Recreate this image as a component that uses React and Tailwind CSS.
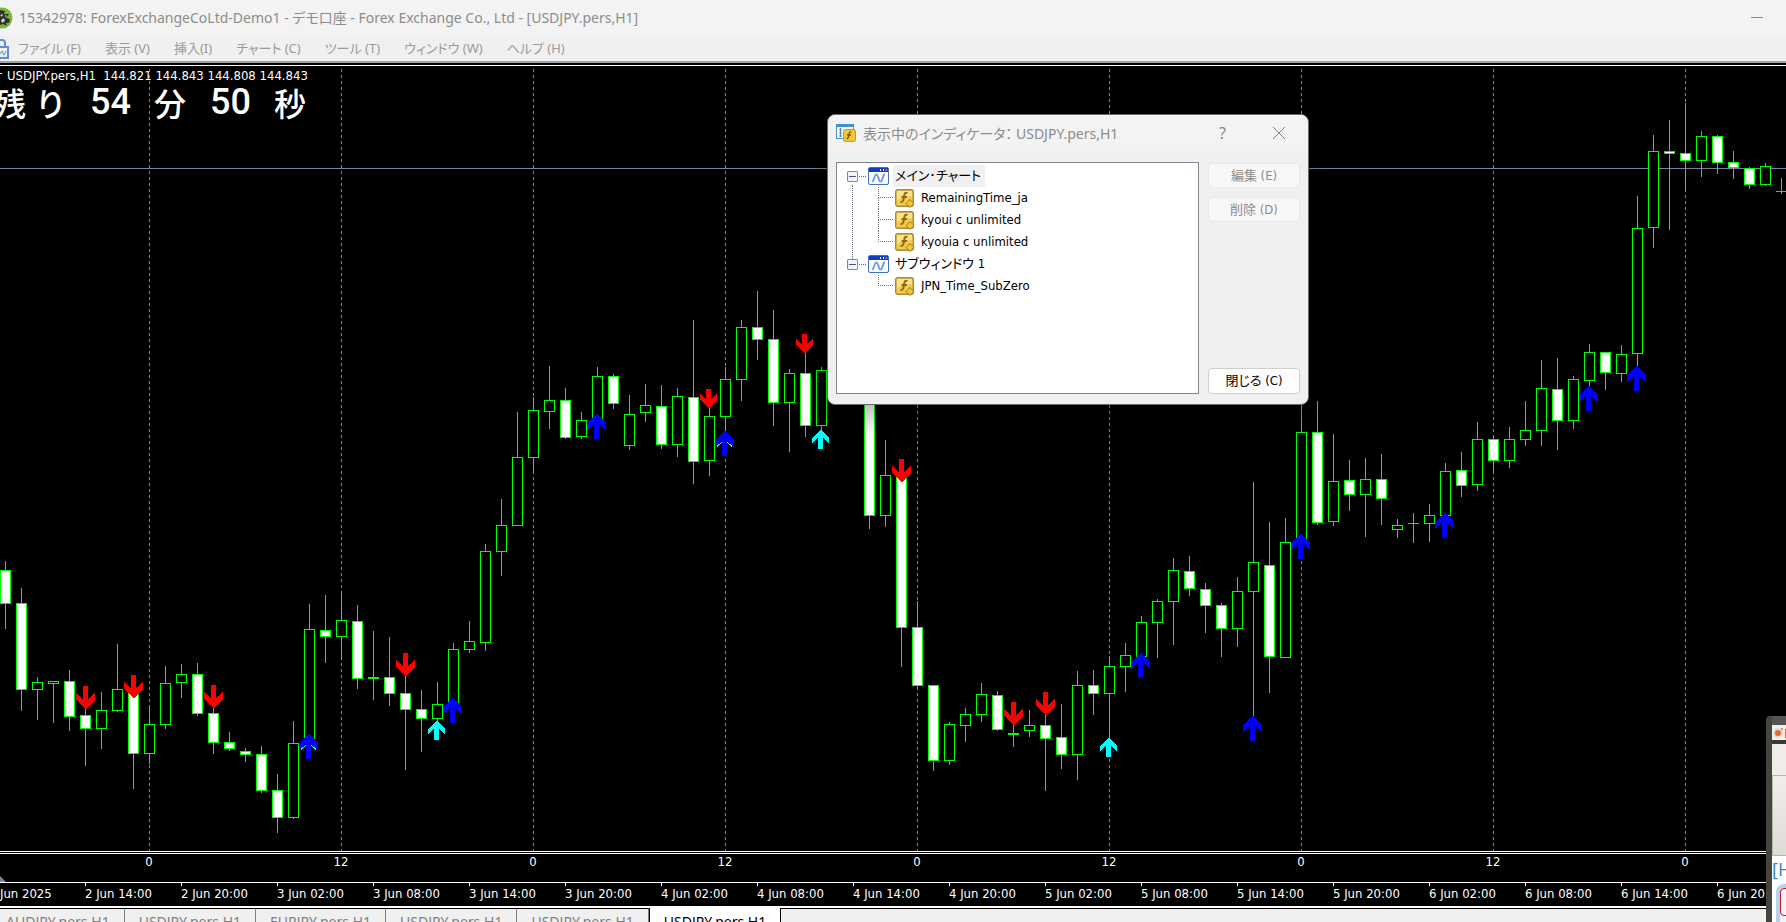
const CANDLES = [
  // high, open/close top, open/close bottom, low, bearish
  [561, 570, 604, 629, 1], [588, 603, 690, 711, 1], [677, 682, 690, 720, 0], [681, 681, 684, 723, 0],
  [670, 681, 717, 731, 1], [700, 715, 729, 766, 1], [692, 710, 729, 749, 0], [644, 689, 711, 712, 0],
  [689, 689, 754, 789, 1], [705, 724, 754, 764, 0], [666, 683, 725, 729, 0], [664, 674, 683, 698, 0],
  [663, 674, 714, 716, 1], [700, 713, 743, 754, 1], [732, 742, 749, 751, 1], [748, 751, 755, 762, 1],
  [746, 754, 791, 793, 1], [774, 790, 818, 833, 1], [721, 743, 818, 819, 0], [604, 629, 744, 744, 0],
  [595, 630, 637, 663, 1], [591, 620, 637, 660, 0], [605, 621, 679, 689, 1], [631, 677, 679, 700, 0],
  [637, 677, 694, 706, 1], [660, 693, 710, 770, 1], [690, 709, 719, 752, 1], [682, 704, 719, 724, 0],
  [643, 649, 703, 703, 0], [621, 641, 650, 653, 0], [544, 551, 643, 651, 0], [499, 525, 552, 576, 0],
  [412, 457, 526, 526, 0], [397, 410, 458, 472, 0], [366, 400, 412, 429, 0], [388, 400, 438, 439, 1],
  [412, 420, 437, 439, 0], [367, 376, 420, 420, 0], [374, 376, 404, 409, 1], [395, 414, 446, 450, 0],
  [384, 405, 413, 422, 0], [385, 406, 445, 449, 1], [388, 396, 445, 457, 0], [320, 397, 462, 484, 1],
  [400, 416, 461, 476, 0], [367, 379, 417, 432, 0], [320, 327, 380, 401, 0], [291, 327, 340, 360, 1],
  [310, 339, 403, 426, 1], [369, 373, 403, 452, 0], [345, 373, 426, 437, 1], [367, 370, 426, 431, 0],
  [300, 310, 370, 380, 1], [290, 300, 330, 350, 0], [300, 310, 516, 529, 1], [440, 475, 516, 527, 0],
  [470, 476, 628, 667, 1], [601, 627, 686, 688, 1], [685, 685, 761, 771, 1], [722, 724, 761, 765, 0],
  [708, 714, 726, 742, 0], [683, 694, 715, 722, 0], [691, 695, 730, 731, 1], [720, 733, 735, 747, 0],
  [710, 725, 731, 737, 0], [710, 725, 739, 791, 1], [704, 737, 755, 769, 1], [671, 685, 755, 780, 0],
  [670, 685, 694, 715, 1], [656, 666, 694, 740, 0], [643, 655, 667, 692, 0], [616, 622, 657, 657, 0],
  [599, 601, 623, 658, 0], [558, 570, 602, 645, 0], [556, 571, 589, 596, 1], [583, 589, 606, 633, 1],
  [603, 605, 629, 657, 1], [577, 591, 629, 647, 0], [482, 562, 592, 718, 0], [522, 565, 657, 693, 1],
  [518, 542, 658, 658, 0], [390, 432, 540, 540, 0], [401, 432, 523, 525, 1], [434, 481, 522, 526, 0],
  [460, 480, 495, 511, 1], [458, 479, 495, 537, 0], [454, 479, 499, 525, 1], [519, 525, 530, 538, 0],
  [513, 523, 524, 543, 0], [504, 515, 524, 542, 0], [463, 471, 516, 516, 0], [452, 470, 486, 497, 1],
  [422, 439, 485, 491, 0], [437, 439, 461, 473, 1], [427, 439, 461, 468, 0], [401, 430, 440, 446, 0],
  [360, 388, 431, 446, 0], [358, 389, 421, 450, 1], [376, 379, 421, 429, 0], [344, 352, 381, 387, 0],
  [352, 352, 373, 390, 1], [345, 354, 374, 382, 0], [196, 228, 354, 368, 0], [135, 151, 228, 248, 0],
  [120, 151, 154, 230, 1], [103, 153, 161, 192, 1], [131, 136, 161, 177, 0], [135, 136, 163, 174, 1],
  [151, 162, 168, 179, 1], [167, 168, 185, 189, 1], [163, 166, 185, 186, 0], [178, 191, 192, 194, 0],
];

const SELL = [[76, 686], [124, 675], [204, 685], [396, 653], [892, 459], [1004, 702], [1036, 692]];
const SELL_SMALL = [[700, 389], [796, 334]];
const BUY = [
  [299, 734, 1], [443, 698], [587, 414], [715, 431, 1], [1131, 653], [1243, 716], [1291, 534],
  [1435, 513], [1579, 386], [1627, 366],
];
const BUY_SMALL = [[428, 721], [812, 430], [1100, 738]];
const SESSIONS = [149, 341, 533, 725, 917, 1109, 1301, 1493, 1685];
const TIMES = [
  '2 Jun 14:00', '2 Jun 20:00', '3 Jun 02:00', '3 Jun 08:00', '3 Jun 14:00', '3 Jun 20:00',
  '4 Jun 02:00', '4 Jun 08:00', '4 Jun 14:00', '4 Jun 20:00', '5 Jun 02:00', '5 Jun 08:00',
  '5 Jun 14:00', '5 Jun 20:00', '6 Jun 02:00', '6 Jun 08:00', '6 Jun 14:00', '6 Jun 20:00',
];
const MENUS = ['ファイル (F)', '表示 (V)', '挿入(I)', 'チャート (C)', 'ツール (T)', 'ウィンドウ (W)', 'ヘルプ (H)'];
const TABS = ['AUDJPY.pers,H1', 'USDJPY.pers,H1', 'EURJPY.pers,H1', 'USDJPY.pers,H1', 'USDJPY.pers,H1'];

function Chart() {
  return (
    <svg className="block h-[785px] w-[1786px] shrink-0" viewBox="0 66 1786 785" shapeRendering="crispEdges">
      {SESSIONS.map((x) => (
        <line key={x} x1={x + 0.5} x2={x + 0.5} y1="69" y2="851" stroke="#778899" strokeDasharray="3 3" />
      ))}
      <rect x="0" y="168" width="1786" height="1" fill="#778899" />
      <path d="M0 73h2v1H0z" fill="#fff" />
      {CANDLES.map(([high, top, bottom, low, bear], i) => (
        <g key={i}>
          <rect x={5 + i * 16} y={high} width="1" height={low - high} fill="#0f0" />
          <rect x={i * 16} y={top} width="11" height={bottom - top} fill="#0f0" />
          {bottom - top > 2 && (
            <rect x={i * 16 + 1} y={top + 1} width="9" height={bottom - top - 2} fill={bear ? '#fff' : '#000'} />
          )}
        </g>
      ))}
      {SELL.map(([x, y]) => (
        <path key={x} transform={`translate(${x} ${y})`} fill="#f00" d="M7 0h5v13l7-6v7l-9 9h-1l-9-9V7l7 6z" />
      ))}
      {SELL_SMALL.map(([x, y]) => (
        <path key={x} transform={`translate(${x} ${y})`} fill="#f00" d="M6 0h5v10l6-5v6l-8 8h-1l-8-8V5l6 5z" />
      ))}
      {BUY.map(([x, y, edge]) => (
        <g key={x} transform={`translate(${x} ${y})`}>
          <path fill="#00f" d="M9 0h1l9 9v7l-7-6v15H7V10l-7 6V9z" />
          {edge && <path fill="none" stroke="#0ff" d="M2 15.500l5-4.500M12 11l5 4.500" />}
        </g>
      ))}
      {BUY_SMALL.map(([x, y]) => (
        <path key={x} transform={`translate(${x} ${y})`} fill="#0ff" d="M8 0h1l8 8v5l-6-5v11H6V8l-6 5V8z" />
      ))}
    </svg>
  );
}

function WindowIcon() {
  return (
    <svg className="h-[18px] w-[21px] shrink-0" viewBox="0 0 21 18">
      <rect x="0.5" y="0.5" width="20" height="17" rx="1.5" fill="#fff" stroke="#3f6fd0" />
      <path d="M1 1h19v4H1z" fill="#0b3fc4" />
      <path d="M12 2h1v2h-1zM15 2h1v2h-1z" fill="#fff" />
      <path d="M17.500 2h1.500v2h-1.500z" fill="#f66" />
      <path d="M4 14.500c2.500-.5 2-7 4.500-7s1.500 7 4 7 1.500-6.500 4.500-7.500" fill="none" stroke="#7d9fe6" strokeWidth="2" />
    </svg>
  );
}

function IndicatorIcon() {
  return (
    <svg className="h-[19px] w-[20px] shrink-0" viewBox="0 0 20 19">
      <rect x="0.700" y="0.700" width="17.600" height="16.600" rx="2" fill="#f2cb4c" stroke="#a88a3a" strokeWidth="1.400" />
      <path d="M2 2h15v5q-8 0-15 4z" fill="#fae38c" />
      <path d="M12.500 4c-2.500-1.200-3 1-3.400 3.500S8.500 13.500 5.500 13M6.500 8h5.500" fill="none" stroke="#8a6a18" strokeWidth="1.900" />
      <path d="M15 10.500l4 4-4 4-4-4z" fill="#f3c63a" stroke="#9a741c" />
    </svg>
  );
}

function DialogIcon() {
  return (
    <svg className="h-[18px] w-5 shrink-0" viewBox="0 0 20 18">
      <rect x="0.500" y="0.500" width="17" height="14" fill="#f4fbff" stroke="#4a93c4" />
      <path d="M0 0h18v3H0z" fill="#3d93cc" />
      <path d="M4.500 4v9M3 6h3M3 9h3M3 12h3" stroke="#5b87a8" fill="none" />
      <rect x="7.500" y="5.500" width="12" height="12" rx="2" fill="#f3c634" stroke="#c8961b" />
      <path d="M15.500 8c-2-.8-2.300.8-2.600 2.500s-.4 4.500-2.400 4M11 11h4" fill="none" stroke="#7d5a10" strokeWidth="1.300" />
    </svg>
  );
}

function TreeGroup({ label, items, selected, last }) {
  return (
    <li className="relative">
      {!last && <span className="absolute top-5 left-[15px] h-[76px] border-l border-dotted border-gray-500" />}
      <div className="flex h-[22px] items-center">
        <button
          aria-label="折りたたむ"
          className="ml-[10px] flex h-[11px] w-[11px] items-center justify-center rounded-[1px] border border-[#8a8a8a] bg-[#f4f4f4]"
        >
          <span className="h-px w-[7px] bg-[#3c5a9a]" />
        </button>
        <span className="mr-[2px] ml-px w-[7px] border-t border-dotted border-gray-500" />
        <WindowIcon />
        <span className={`ml-1 h-full px-[2px] pr-1 leading-[21px] ${selected ? 'bg-[#f0f0f0]' : ''}`}>{label}</span>
      </div>
      <ul>
        {items.map((item, i) => (
          <li key={item} className="flex h-[22px] items-center">
            <span className="ml-[41px] h-full w-[15px] shrink-0">
              <span className="block h-[11px] border-b border-l border-dotted border-gray-500" />
              {i < items.length - 1 && <span className="block h-[11px] border-l border-dotted border-gray-500" />}
            </span>
            <span className="ml-[2px] flex items-center gap-[6px]">
              <IndicatorIcon />
              {item}
            </span>
          </li>
        ))}
      </ul>
    </li>
  );
}

function Dialog() {
  return (
    <section className="absolute top-[114px] left-[827px] w-[482px] rounded-lg border border-[#6a6a6a] bg-[#f0f0f0] shadow-[0_12px_28px_rgba(0,0,0,0.3)]">
      <header className="flex h-9 items-center rounded-t-lg bg-[#f3f3f3] pr-[22px] pl-2 text-[#8c8c8c]">
        <DialogIcon />
        <h2 className="ml-[7px] flex-1 text-[14px]">表示中のインディケータ： USDJPY.pers,H1</h2>
        <button aria-label="ヘルプ" className="mr-[46px] text-base">?</button>
        <button aria-label="閉じる">
          <svg className="h-[14px] w-[14px]" viewBox="0 0 14 14" fill="none" stroke="#808080">
            <path d="M1 1l12 12M13 1L1 13" />
          </svg>
        </button>
      </header>
      <div className="flex gap-[9px] px-2 pt-[11px] pb-[10px] font-['DejaVu_Sans_Condensed','Noto_Sans_CJK_JP',sans-serif] text-[13px]">
        <ul className="h-[232px] w-[363px] border border-[#828790] bg-white pt-[2px] text-black">
          <TreeGroup label="メイン･チャート" items={['RemainingTime_ja', 'kyoui c unlimited', 'kyouia c unlimited']} selected />
          <TreeGroup label="サブウィンドウ 1" items={['JPN_Time_SubZero']} last />
        </ul>
        <div className="flex flex-1 flex-col gap-[9px] pt-px">
          <button disabled className="h-[25px] rounded border border-[#e9e9e9] bg-[#f7f7f7] text-[#8c8c8c]">編集 (E)</button>
          <button disabled className="h-[25px] rounded border border-[#e9e9e9] bg-[#f7f7f7] text-[#8c8c8c]">削除 (D)</button>
          <button className="mt-auto h-[26px] rounded border border-[#cfcfcf] bg-[#fdfdfd] text-black">閉じる (C)</button>
        </div>
      </div>
    </section>
  );
}

export default function App() {
  return (
    <div className="relative flex h-screen flex-col overflow-hidden bg-black font-['Noto_Sans','Noto_Sans_CJK_JP',sans-serif] [font-feature-settings:'palt']">
      {/* Title bar */}
      <header className="flex h-[35px] shrink-0 items-center bg-[#f3f3f3] text-[14px] whitespace-nowrap text-[#8c8c8c]">
        <svg className="h-6 w-[13px]" viewBox="0 0 13 24">
          <circle cx="2" cy="12" r="10.500" fill="#7db53c" />
          <path d="M0 4l5 1-1 3 5 0-3 4 4 1-1 4-3 0 1 3-4-2-3 1z" fill="#2c3328" />
          <path d="M0 9l3-1-1 3zM1 14l3-2 1 3-3 2zM5 9l2 1-2 1z" fill="#c9d2c0" />
        </svg>
        <h1 className="ml-[6px] flex-1">15342978: ForexExchangeCoLtd-Demo1 - デモ口座 - Forex Exchange Co., Ltd - [USDJPY.pers,H1]</h1>
        <button aria-label="最小化" className="mr-[23px] flex h-6 w-3 items-center">
          <span className="h-px w-3 bg-[#909090]" />
        </button>
      </header>

      {/* Menu bar */}
      <nav className="flex h-[26px] shrink-0 items-center bg-[#f0f0f0] pt-[2px] text-[13px] whitespace-nowrap text-[#9a9a9a]">
        <svg className="h-5 w-[9px]" viewBox="0 0 9 20" fill="none" stroke="#5b8fe0" strokeWidth="2">
          <path d="M0 1h2q3 0 3 3v4M0 8h8v11H0" />
          <path d="M0 15l2-3 2 4 2-4" strokeWidth="1" />
        </svg>
        <ul className="ml-[9px] flex gap-6">
          {MENUS.map((menu) => (
            <li key={menu}><button>{menu}</button></li>
          ))}
        </ul>
      </nav>
      <div className="h-[5px] shrink-0 border-t-2 border-b border-t-[#a0a0a0] border-b-white bg-black" />

      {/* Chart */}
      <main className="relative shrink-0 overflow-hidden">
        <Chart />
        <div className="absolute top-[2px] left-0 text-white">
          <p className="ml-[7px] font-['DejaVu_Sans_Condensed',sans-serif] text-[13px] leading-4 whitespace-pre">USDJPY.pers,H1  144.821 144.843 144.808 144.843</p>
          <p className="-ml-[10px] flex items-start font-['Roboto','Noto_Sans_CJK_JP',sans-serif] text-[32px] leading-9 font-medium">
            <span className="w-10 pt-[3px] text-center">残</span>
            <span className="w-10 pt-[3px] text-center">り</span>
            <span className="mx-5 w-10 text-center text-[36px]">54</span>
            <span className="w-10 pt-[3px] text-center">分</span>
            <span className="mx-5 w-10 text-center text-[36px]">50</span>
            <span className="w-10 pt-[3px] text-center">秒</span>
          </p>
        </div>
      </main>

      {/* Sub window with the hour scale */}
      <section className="relative flex h-[31px] shrink-0 overflow-hidden border-t-3 border-double border-white pl-[53px] text-white">
        {SESSIONS.map((x, i) => (
          <span key={x} className="w-[192px] shrink-0 text-center font-['DejaVu_Sans_Condensed',sans-serif] text-[13px] leading-4">{i % 2 ? '12' : '0'}</span>
        ))}
        <svg className="absolute bottom-0 left-0 h-[6px] w-[6px]" viewBox="0 0 6 6">
          <path d="M0 0l6 6H0z" fill="#778899" />
        </svg>
      </section>
      <section className="flex h-6 shrink-0 overflow-hidden border-t border-white font-['DejaVu_Sans_Condensed',sans-serif] text-[13px] whitespace-nowrap text-white">
        <span className="w-[85px] shrink-0 leading-[22px]">Jun 2025</span>
        {TIMES.map((time) => (
          <span key={time} className="w-24 shrink-0 leading-[22px]">
            <span className="block h-[3px] w-px bg-white" />
            <span className="-mt-[3px] block">{time}</span>
          </span>
        ))}
      </section>

      {/* Chart tabs */}
      <footer className="flex h-7 shrink-0 border-t-2 border-white bg-[#f0f0f0] text-[14px] whitespace-nowrap text-[#808080]">
        <span className="-ml-2" />
        {TABS.map((tab, i) => (
          <button key={i} className="border-t border-r border-t-black border-r-[#808080] px-[14px]">{tab}</button>
        ))}
        <button className="border-x border-black bg-white px-[14px] text-black">USDJPY.pers,H1</button>
        <span className="flex-1 border-t border-black" />
      </footer>

      <Dialog />

      {/* Overlapping window at the right edge */}
      <aside className="absolute top-[716px] right-0 bottom-0 w-5 overflow-hidden rounded-tl border-l-[6px] border-[#45443f] bg-white">
        <div className="h-[9px] bg-[#55544f]" />
        <svg className="block h-[15px] w-[15px]" viewBox="0 0 15 15">
          <rect width="15" height="15" fill="#f2f0ee" />
          <circle cx="6" cy="8" r="5" fill="#dcdcdc" />
          <circle cx="6" cy="8" r="3" fill="#e8672a" />
          <circle cx="10" cy="4" r="1" fill="#e8672a" />
          <path d="M13 4h2v9h-2z" fill="#e8672a" />
        </svg>
        <div className="h-1 bg-[#3b3a36]" />
        <div className="h-[31px] bg-[#f0ece7]" />
        <div className="h-[81px] border border-r-0 border-[#b8b5b0] bg-linear-to-b from-[#f2efeb] to-[#dedbd7]" />
        <p className="h-[28px] text-[18px] leading-[26px] whitespace-nowrap text-[#3a87c8]">[H1]</p>
        <div className="ml-1 h-12 w-8 rounded-lg border-4 border-[#b7d3ea] bg-[#eef4f9]">
          <div className="h-7 rounded border border-[#b52020]" />
        </div>
      </aside>
    </div>
  );
}
